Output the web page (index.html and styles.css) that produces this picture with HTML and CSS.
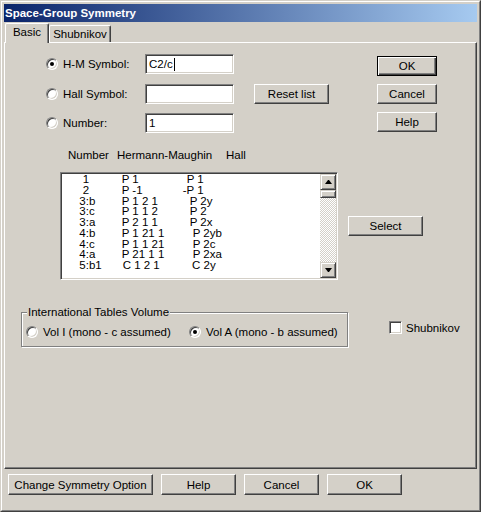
FILE: index.html
```html
<!DOCTYPE html>
<html>
<head>
<meta charset="utf-8">
<link rel="stylesheet" href="styles.css">
</head>
<body>
<div class="window">
  <div class="frame">
    <div class="titlebar">Space-Group Symmetry</div>
    <div class="tabs">
      <div class="tab active">Basic</div>
      <div class="tab">Shubnikov</div>
    </div>
    <div class="panel">
      <div class="top">
        <div class="form">
          <div class="row">
            <span class="radio checked"></span><span class="lbl">H-M Symbol:</span>
            <div class="textbox">C2/c<span class="caret"></span></div>
          </div>
          <div class="row">
            <span class="radio"></span><span class="lbl">Hall Symbol:</span>
            <div class="textbox"></div>
            <button class="btn reset">Reset list</button>
          </div>
          <div class="row">
            <span class="radio"></span><span class="lbl">Number:</span>
            <div class="textbox">1</div>
          </div>
        </div>
        <div class="side">
          <button class="btn side-btn default">OK</button>
          <button class="btn side-btn">Cancel</button>
          <button class="btn side-btn">Help</button>
        </div>
      </div>

      <div class="colhead">
        <span class="c1">Number</span><span class="c2">Hermann-Maughin</span><span>Hall</span>
      </div>

      <div class="listrow">
        <div class="listbox">
          <div class="items">
            <div class="item"><span class="s">1</span><span>P 1</span><span class="h4">P 1</span></div>
            <div class="item"><span class="s">2</span><span>P -1</span><span>-P 1</span></div>
            <div class="item"><span>3:b</span><span>P 1 2 1</span><span class="h7">P 2y</span></div>
            <div class="item"><span>3:c</span><span>P 1 1 2</span><span class="h7">P 2</span></div>
            <div class="item"><span>3:a</span><span>P 2 1 1</span><span class="h7">P 2x</span></div>
            <div class="item"><span>4:b</span><span>P 1 21 1</span><span class="h10">P 2yb</span></div>
            <div class="item"><span>4:c</span><span>P 1 1 21</span><span class="h10">P 2c</span></div>
            <div class="item"><span>4:a</span><span>P 21 1 1</span><span class="h10">P 2xa</span></div>
            <div class="item"><span>5:b1</span><span class="m1">C 1 2 1</span><span class="h9">C 2y</span></div>
          </div>
          <div class="scrollbar">
            <div class="sb-btn"><span class="arrow up"></span></div>
            <div class="sb-btn thumb"></div>
            <div class="track"></div>
            <div class="sb-btn"><span class="arrow down"></span></div>
          </div>
        </div>
        <button class="btn select">Select</button>
      </div>

      <div class="volrow">
        <div class="group">
          <span class="legend">International Tables Volume</span>
          <div class="radios">
            <span class="opt opt1"><span class="radio"></span>Vol I (mono - c assumed)</span>
            <span class="opt"><span class="radio checked"></span>Vol A (mono - b assumed)</span>
          </div>
        </div>
        <div class="check"><span class="checkbox"></span>Shubnikov</div>
      </div>
    </div>

    <div class="bottom">
      <button class="btn wide">Change Symmetry Option</button>
      <button class="btn">Help</button>
      <button class="btn">Cancel</button>
      <button class="btn">OK</button>
    </div>
  </div>
</div>
</body>
</html>
```
FILE: styles.css
```css
body {
  margin: 0;
  background: #d4d0c8;
}

.window {
  width: 481px;
  height: 512px;
  box-sizing: border-box;
  border: 1px solid;
  border-color: #d4d0c8 #404040 #404040 #d4d0c8;
  background: #d4d0c8;
  font-family: "Liberation Sans", Arial, sans-serif;
  font-size: 11.5px;
  color: #000;
}

.frame {
  height: 100%;
  box-sizing: border-box;
  border: 1px solid;
  border-color: #fff #808080 #808080 #fff;
  padding: 2px;
}

.titlebar {
  height: 18px;
  line-height: 18px;
  padding-left: 1px;
  background: linear-gradient(to right, #0a246a, #a6caf0);
  color: #fff;
  font-weight: bold;
  font-size: 11.5px;
}

.tabs {
  height: 20px;
  display: flex;
  align-items: flex-end;
  padding-left: 1px;
  position: relative;
  z-index: 1;
}

.tab {
  height: 17px;
  line-height: 16px;
  width: 62px;
  box-sizing: border-box;
  text-align: center;
  background: #d4d0c8;
  border-top: 1px solid #fff;
  border-left: 1px solid #fff;
  border-right: 1px solid #404040;
  box-shadow: inset -1px 0 #808080;
  border-radius: 2px 2px 0 0;
}

.tab.active {
  width: 44px;
  height: 20px;
  line-height: 17px;
  margin-bottom: -1px;
}

.panel {
  height: 427px;
  box-sizing: border-box;
  border: 1px solid;
  border-color: #fff #404040 #404040 #fff;
  box-shadow: inset -1px -1px #808080;
}

.top {
  display: flex;
  margin-top: 11px;
  padding-left: 41px;
}

.form {
  width: 283px;
  display: flex;
  flex-direction: column;
  gap: 9.5px;
}

.row {
  display: flex;
  align-items: center;
  height: 20px;
}

.radio {
  flex: none;
  width: 12px;
  height: 12px;
  box-sizing: border-box;
  border-radius: 50%;
  border: 1px solid;
  border-color: #808080 #fff #fff #808080;
  background: #fff;
  box-shadow: inset 1px 1px #404040, inset -1px -1px #d4d0c8;
  margin-right: 5px;
  display: flex;
  align-items: center;
  justify-content: center;
}

.radio.checked::after {
  content: "";
  width: 4px;
  height: 4px;
  border-radius: 50%;
  background: #000;
}

.lbl {
  width: 82px;
}

.textbox {
  width: 89px;
  height: 20px;
  box-sizing: border-box;
  border: 1px solid;
  border-color: #808080 #fff #fff #808080;
  box-shadow: inset 1px 1px #404040, inset -1px -1px #d4d0c8;
  background: #fff;
  padding: 0 3px;
  display: flex;
  align-items: center;
}

.caret {
  width: 1px;
  height: 13px;
  background: #000;
  margin-left: 1px;
}

.btn {
  font: inherit;
  color: #000;
  background: #d4d0c8;
  border: 1px solid;
  border-color: #fff #404040 #404040 #fff;
  box-shadow: inset -1px -1px #808080;
  border-radius: 0;
  padding: 0;
  margin: 0;
  height: 20px;
  width: 75px;
  box-sizing: border-box;
}

.btn.reset {
  margin-left: 20px;
}

.side {
  display: flex;
  flex-direction: column;
  gap: 8px;
  margin-top: 2px;
  margin-left: 48px;
}

.side-btn {
  width: 60px;
}

.btn.default {
  border-color: #000;
  box-shadow: inset 1px 1px #fff, inset -1px -1px #404040, inset -2px -2px #808080;
}

.colhead {
  display: flex;
  margin-top: 15px;
  padding-left: 63px;
  line-height: 14px;
}

.c1 {
  width: 49px;
}

.c2 {
  width: 109px;
}

.listrow {
  display: flex;
  align-items: flex-start;
  margin-top: 10px;
  padding-left: 55px;
}

.listbox {
  width: 278px;
  height: 108px;
  box-sizing: border-box;
  border: 1px solid;
  border-color: #808080 #fff #fff #808080;
  box-shadow: inset 1px 1px #404040, inset -1px -1px #d4d0c8;
  background: #fff;
  padding: 1px;
  display: flex;
}

.items {
  flex: 1;
  overflow: hidden;
  padding-left: 17.3px;
  line-height: 10.75px;
}

.item {
  display: grid;
  grid-template-columns: 42.4px 61px auto;
  white-space: pre;
}

.s { padding-left: 3.4px; }
.m1 { padding-left: 1px; }
.h4 { padding-left: 4px; }
.h7 { padding-left: 7px; }
.h9 { padding-left: 9.3px; }
.h10 { padding-left: 10px; }

.scrollbar {
  width: 16px;
  display: flex;
  flex-direction: column;
  background: repeating-conic-gradient(#d4d0c8 0 25%, #fff 0 50%) 0 0 / 2px 2px;
}

.sb-btn {
  flex: none;
  width: 16px;
  height: 16px;
  box-sizing: border-box;
  background: #d4d0c8;
  border: 1px solid;
  border-color: #d4d0c8 #404040 #404040 #d4d0c8;
  box-shadow: inset 1px 1px #fff, inset -1px -1px #808080;
  display: flex;
  align-items: center;
  justify-content: center;
}

.thumb {
  height: 8px;
}

.track {
  flex: 1;
}

.arrow {
  width: 1px;
  height: 0;
  border-left: 3px solid transparent;
  border-right: 3px solid transparent;
}

.arrow.up {
  border-bottom: 4px solid #000;
}

.arrow.down {
  border-top: 4px solid #000;
}

.btn.select {
  margin-left: 10px;
  margin-top: 44px;
}

.volrow {
  display: flex;
  align-items: flex-start;
  margin-top: 32px;
  padding-left: 16px;
}

.group {
  width: 327px;
  box-sizing: border-box;
  border: 1px solid #808080;
  box-shadow: inset 1px 1px #fff, 1px 1px #fff;
  padding: 0 0 7px 4px;
}

.legend {
  display: block;
  width: max-content;
  margin: -8px 0 0 1px;
  padding: 0 1px;
  background: #d4d0c8;
  line-height: 14px;
}

.radios {
  display: flex;
  align-items: center;
  height: 14px;
  margin-top: 6px;
}

.opt {
  display: flex;
  align-items: center;
}

.opt1 {
  width: 163px;
}

.check {
  display: flex;
  align-items: center;
  margin-left: 41px;
  margin-top: 9px;
}

.checkbox {
  width: 13px;
  height: 13px;
  box-sizing: border-box;
  border: 1px solid;
  border-color: #808080 #fff #fff #808080;
  box-shadow: inset 1px 1px #404040, inset -1px -1px #d4d0c8;
  background: #fff;
  margin-right: 4px;
}

.bottom {
  display: flex;
  gap: 8px;
  margin-top: 5px;
  padding-left: 4px;
}

.bottom .btn {
  height: 21px;
}

.bottom .wide {
  width: 145px;
}
```
